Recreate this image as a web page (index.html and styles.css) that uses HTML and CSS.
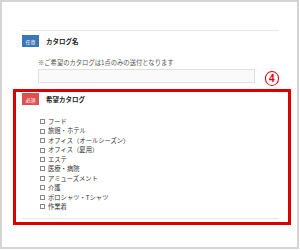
FILE: index.html
```html
<!DOCTYPE html>
<html lang="ja">
<head>
<meta charset="UTF-8" />
<meta name="viewport" content="width=device-width, initial-scale=1.0"/>
<title>希望カタログ</title>
<link rel="stylesheet" href="styles.css">
</head>
<body>

<div class="frame">
  <div class="field field-optional">
    <div class="field-head">
      <span class="badge badge-blue">任意</span>
      <span class="field-title">カタログ名</span>
    </div>
    <p class="note">※ご希望のカタログは1点のみの送付となります</p>
    <div class="input-row">
      <div class="text-input"></div>
      <span class="step">4</span>
    </div>
  </div>

  <!-- 赤枠で囲んだ項目 -->
  <div class="highlight">
    <div class="field field-required">
      <div class="field-head">
        <span class="badge badge-red">必須</span>
        <span class="field-title">希望カタログ</span>
      </div>
      <ul class="options">
        <li><span class="box"></span>フード</li>
        <li><span class="box"></span>旅館・ホテル</li>
        <li><span class="box"></span>オフィス（オールシーズン）</li>
        <li><span class="box"></span>オフィス（夏用）</li>
        <li><span class="box"></span>エステ</li>
        <li><span class="box"></span>医療・病院</li>
        <li><span class="box"></span>アミューズメント</li>
        <li><span class="box"></span>介護</li>
        <li><span class="box"></span>ポロシャツ・Tシャツ</li>
        <li><span class="box"></span>作業着</li>
      </ul>
    </div>
  </div>
</div>

</body>
</html>
```

FILE: styles.css
```css
body {
  margin: 0;
  padding: 0;
  background: #fff;
  font-family: "Noto Sans CJK JP", "Noto Sans", sans-serif;
  color: #333;
}

/* 外枠 */
.frame {
  box-sizing: border-box;
  width: 299px;
  height: 249px;
  border: 2px solid #d4d4d4;
  padding-top: 28px;
}

.field-optional {
  margin: 0 18px 0 20px;
  border-top: 1px solid #e8e8e8;
  padding-top: 4px;
}

.field-head {
  display: flex;
  align-items: center;
  gap: 7px;
  height: 12px;
}

.badge {
  width: 17px;
  height: 12px;
  display: flex;
  align-items: center;
  justify-content: center;
  color: #fff;
  font-size: 5px;
}

.badge-blue {
  background: #3a77b8;
}

.badge-red {
  background: #dc5050;
}

.field-title {
  font-size: 6.5px;
  font-weight: bold;
  color: #222;
}

.note {
  margin: 12px 0 0;
  padding-left: 16px;
  font-size: 6.3px;
  line-height: 8px;
  color: #555;
}

.input-row {
  display: flex;
  align-items: flex-start;
  margin-top: 2px;
  padding-left: 16px;
}

.text-input {
  box-sizing: border-box;
  width: 227px;
  height: 14px;
  border: 1px solid #e0e0e0;
  background: #fafafa;
}

/* 丸数字 */
.step {
  box-sizing: border-box;
  width: 15px;
  height: 15px;
  margin: 2px 0 0 10px;
  border: 1.5px solid #dd0000;
  border-radius: 50%;
  display: flex;
  align-items: center;
  justify-content: center;
  color: #dd0000;
  font-family: "Liberation Sans", sans-serif;
  font-weight: bold;
  font-size: 10px;
}

/* 赤枠 */
.highlight {
  margin: 3px 6px 0 11px;
  border: 3px solid #dd0000;
  padding: 1px 9px 3px 6px;
}

.field-required {
  border-bottom: 1px solid #e8e8e8;
  padding-bottom: 6px;
}

.options {
  list-style: none;
  margin: 12px 0 0;
  padding-left: 18px;
  font-size: 6.3px;
  line-height: 9.45px;
}

.options li {
  display: flex;
  align-items: center;
}

.box {
  box-sizing: border-box;
  width: 5px;
  height: 5px;
  border: 1px solid #888;
  margin-right: 3px;
}
```
